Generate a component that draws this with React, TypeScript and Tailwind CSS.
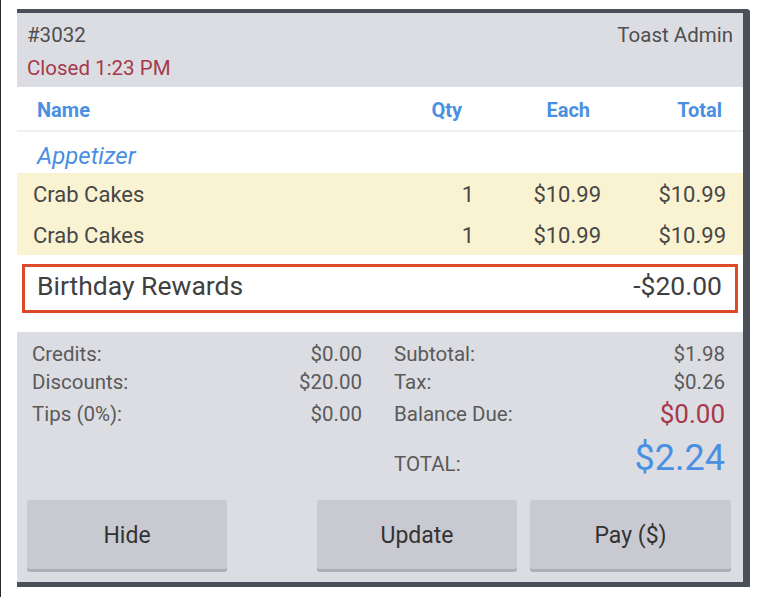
import React from "react";

const font = { fontFamily: "Roboto, 'Noto Sans', sans-serif" };

export default function App() {
  return (
    <div className="w-[761px] h-[597px] bg-white border-l border-[#2a2a2a] overflow-hidden" style={font}>
      <div className="ml-[16px] mt-[9px] w-[733px] h-[578px] border-t-[4px] border-r-[7px] border-b-[5px] border-[#4b4f5a] rounded-tr-[4px] flex flex-col bg-white overflow-hidden">
        {/* header */}
        <div className="h-[74px] shrink-0 bg-[#dcdde2] px-[10px] pt-[9px] flex flex-col">
          <div className="flex justify-between items-center text-[20.5px] leading-[26px] text-[#4f4f4f]">
            <span>#3032</span>
            <span>Toast Admin</span>
          </div>
          <div className="text-[20.5px] leading-[26px] mt-[7px] text-[#a5394b]">Closed 1:23 PM</div>
        </div>
        {/* table header */}
        <div className="h-[45px] shrink-0 flex items-center border-b-2 border-[#eef0f4] text-[#4a90e2] font-bold text-[20px] pt-[2px]">
          <span className="pl-[20px] w-[380px]">Name</span>
          <span className="w-[65px] text-right">Qty</span>
          <span className="w-[128px] text-right">Each</span>
          <span className="w-[132px] text-right">Total</span>
        </div>
        <div className="h-[41px] shrink-0 flex items-center pl-[20px] pt-[7px] italic text-[24px] text-[#4a90e2]">Appetizer</div>
        <div className="bg-[#faf3d2] text-[22px] text-[#474747] shrink-0">
          {[0, 1].map((i) => (
            <div key={i} className="h-[41px] flex items-center pt-[2px]">
              <span className="pl-[16px] w-[392px]">Crab Cakes</span>
              <span className="w-[65px] text-right">1</span>
              <span className="w-[127px] text-right">$10.99</span>
              <span className="w-[125px] text-right">$10.99</span>
            </div>
          ))}
        </div>
        <div className="px-[5px] pt-[9px] pb-[19px] shrink-0">
          <div className="h-[49px] border-[3px] border-[#dc4a2c] flex items-center justify-between pl-[12px] pr-[13px] pb-[5px] text-[26.5px] text-[#404040]">
            <span>Birthday Rewards</span>
            <span>-$20.00</span>
          </div>
        </div>
        {/* summary */}
        <div className="flex-1 bg-[#dcdde2] flex flex-col">
          <div className="flex pl-[15px] pr-[17px] pt-[8px] text-[20.5px] text-[#5a5a5a] leading-[24px]">
            <div className="w-[330px] flex flex-col">
              <div className="h-[28px] flex justify-between items-center"><span>Credits:</span><span>$0.00</span></div>
              <div className="h-[28px] flex justify-between items-center"><span>Discounts:</span><span>$20.00</span></div>
              <div className="h-[36px] flex justify-between items-center"><span>Tips (0%):</span><span>$0.00</span></div>
            </div>
            <div className="w-[331px] ml-[32px] flex flex-col">
              <div className="h-[28px] flex justify-between items-center"><span>Subtotal:</span><span>$1.98</span></div>
              <div className="h-[28px] flex justify-between items-center"><span>Tax:</span><span>$0.26</span></div>
              <div className="h-[36px] flex justify-between items-center"><span>Balance Due:</span><span className="text-[26px] text-[#a5394b]">$0.00</span></div>
              <div className="h-[52px] flex justify-between items-center">
                <span className="mt-[12px]">TOTAL:</span>
                <span className="text-[36px] leading-[40px] text-[#4a90e2]">$2.24</span>
              </div>
            </div>
          </div>
          <div className="flex pl-[10px] mt-[16px] text-[23px] text-[#333]">
            <button className="w-[200px] h-[69px] pt-[4px] rounded-[3px] bg-[#c9cad1] shadow-[0_3px_0_#aeafb7]">Hide</button>
            <button className="w-[200px] h-[69px] pt-[4px] ml-[90px] rounded-[3px] bg-[#c9cad1] shadow-[0_3px_0_#aeafb7]">Update</button>
            <button className="w-[201px] h-[69px] pt-[4px] ml-[13px] rounded-[3px] bg-[#c9cad1] shadow-[0_3px_0_#aeafb7]">Pay ($)</button>
          </div>
        </div>
      </div>
    </div>
  );
}
